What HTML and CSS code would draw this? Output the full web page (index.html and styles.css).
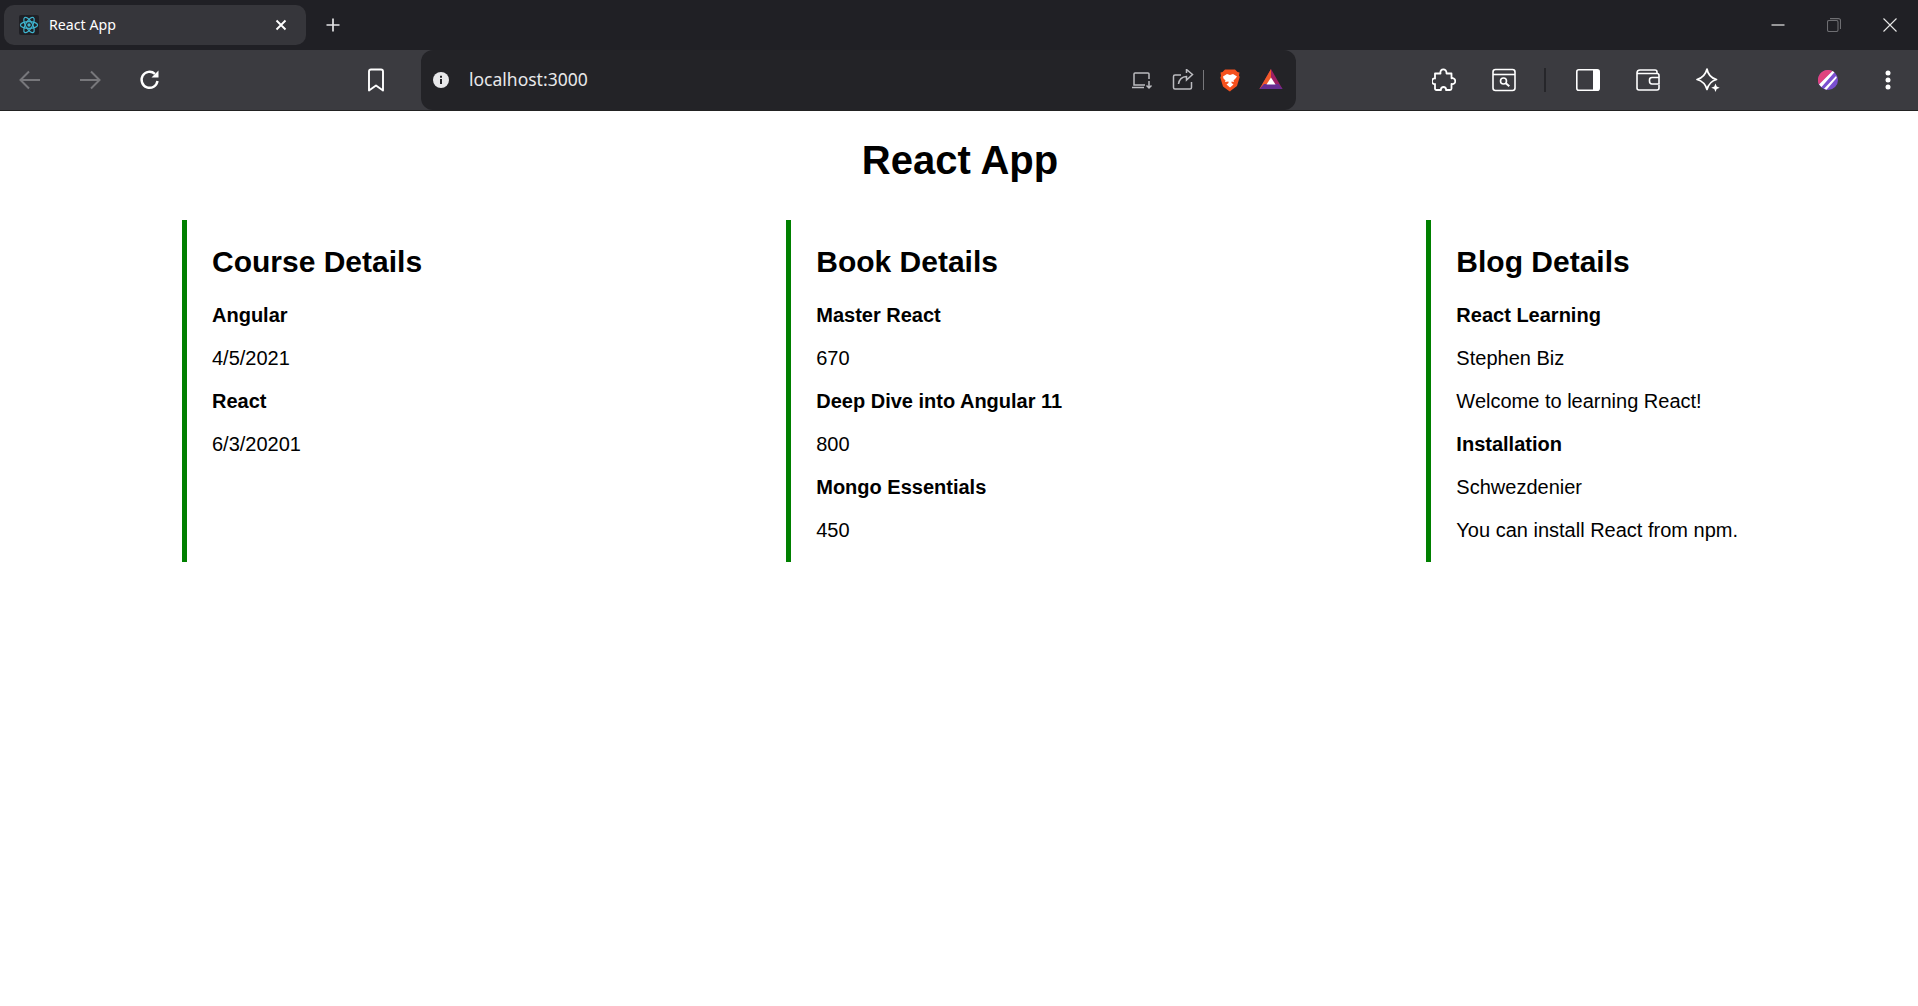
FILE: index.html
```html
<!DOCTYPE html>
<html>
<head>
  <meta charset="UTF-8">
  <title>React App</title>
  <link rel="stylesheet" href="styles.css">
</head>
<body>
  <div class="tab-strip">
    <div class="tab">
      <span class="favicon">
        <svg width="20" height="20" viewBox="0 0 20 20" fill="none" stroke="#3fb4cf" stroke-width="1.2">
          <ellipse cx="10" cy="10" rx="8.6" ry="3.4"/>
          <ellipse cx="10" cy="10" rx="8.6" ry="3.4" transform="rotate(60 10 10)"/>
          <ellipse cx="10" cy="10" rx="8.6" ry="3.4" transform="rotate(120 10 10)"/>
          <circle cx="10" cy="10" r="1.7" fill="#3fb4cf" stroke="none"/>
        </svg>
      </span>
      <span class="tab-title">React App</span>
      <svg class="tab-close" width="12" height="12" viewBox="0 0 12 12" stroke="#fff" stroke-width="1.9"><path d="M1.5 1.5l9 9M10.5 1.5l-9 9"/></svg>
    </div>
    <svg class="new-tab" width="16" height="16" viewBox="0 0 16 16" stroke="#e4e4e6" stroke-width="1.7"><path d="M8 1.5v13M1.5 8h13"/></svg>
    <div class="window-controls">
      <svg width="14" height="14" viewBox="0 0 14 14" stroke="#e8e8e8" stroke-width="1.2"><path d="M0.5 7h13"/></svg>
      <svg width="14" height="14" viewBox="0 0 14 14" fill="none" stroke="#6e6e72" stroke-width="1.1"><rect x="0.5" y="2.5" width="10.5" height="11" rx="1.5"/><path d="M3 0.6h8.5a2 2 0 0 1 2 2v8.5"/></svg>
      <svg width="14" height="14" viewBox="0 0 14 14" stroke="#e8e8e8" stroke-width="1.1"><path d="M0.5 0.5l13 13M13.5 0.5l-13 13"/></svg>
    </div>
  </div>

  <div class="toolbar">
    <div class="nav-buttons">
      <svg class="icon" viewBox="0 0 24 24" fill="none" stroke="#77777b" stroke-width="2"><path d="M22 12H3M11 3.500L2.500 12l8.500 8.500"/></svg>
      <svg class="icon" viewBox="0 0 24 24" fill="none" stroke="#77777b" stroke-width="2"><path d="M2 12h19M13 3.500l8.500 8.500L13 20.500"/></svg>
      <svg class="icon" viewBox="0 0 24 24" fill="none" stroke="#fff" stroke-width="2.400"><path d="M19.500 13a8 8 0 1 1-2.600-7.200"/><path d="M20.500 2.500v7h-7z" fill="#fff" stroke="none"/></svg>
    </div>
    <svg class="icon bookmark" viewBox="0 0 24 24" fill="none" stroke="#fff" stroke-width="1.900" stroke-linejoin="round"><path d="M5 3.500q0-2 2-2h10q2 0 2 2v19l-7-5-7 5z"/></svg>
    <div class="omnibox">
      <svg class="info-icon" width="16" height="16" viewBox="0 0 16 16"><circle cx="8" cy="8" r="8" fill="#e8e8ea"/><path d="M7 7h2v5H7zM7 3.800h2v2H7z" fill="#232327"/></svg>
      <span class="url">localhost:3000</span>
      <div class="omnibox-actions">
        <svg class="small-icon" viewBox="0 0 22 22" fill="none" stroke="#bcbcc0" stroke-width="1.500"><path d="M14 16H3V5q0-1 1-1h13q1 0 1 1v5"/><path d="M1 18.500h12"/><path d="M18 12v6.500M15.500 16.500l2.500 2.500 2.500-2.500"/></svg>
        <svg class="small-icon" viewBox="0 0 22 22" fill="none" stroke="#bcbcc0" stroke-width="1.500"><path d="M9 6H3q-1.500 0-1.500 1.500v11Q1.500 20 3 20h15q1.500 0 1.500-1.500V13"/><path d="M6.500 15q1-7 8-7.500V11l6-5.500-6-5V4"/></svg>
        <span class="omnibox-sep"></span>
        <svg class="brave-icon" width="20" height="23" viewBox="0 0 20 23">
          <path d="M5 .5h10l2.500 2.500 2 .5-.5 3 .7 1.500-2.700 9-6 4.500-.999 1L9 22l-6-4.500-2.700-9L1 7 .5 3.500l2-.5z" fill="#f4511e"/>
          <path d="M3 7.500L7 5l3 1 3-1 4 2.500-1.500 2-2 2 .5 1.500-2.500-.5V14l2 1.500-3.500 3-3.500-3 2-1.500v-1.500L5 13l.5-1.500-2-2z" fill="#fff"/>
        </svg>
        <svg class="bat-icon" width="24" height="22" viewBox="0 0 24 22"><path d="M12 0l11.500 20H.500z" fill="#9e1f63"/><path d="M12 0L.500 20h6L12 11z" fill="#f15a29"/><path d="M.500 20h23l-4-5H5z" fill="#662d91"/><path d="M12 8.500l4.500 7h-9z" fill="#fff"/></svg>
      </div>
    </div>
    <div class="tool-icons">
      <svg class="icon" viewBox="0 0 24 24" fill="none" stroke="#fff" stroke-width="1.800" stroke-linejoin="round"><path d="M3 5.500h5.500C7.500 0 15 0 14.500 5.500H19.500v4.800c5-1 5 6.700 0 5.700V20.500q0 1.500-1.500 1.500H14c.7-4-5.700-4-5 0H4.500Q3 22 3 20.500V16C-1 17-1 9.500 3 10.500z"/></svg>
      <svg class="icon" viewBox="0 0 24 24" fill="none" stroke="#fff" stroke-width="1.600"><rect x="1" y="1.500" width="22" height="21" rx="2.500"/><path d="M1 6.500h22"/><circle cx="11.500" cy="13" r="3"/><path d="M13.800 15.300l3.500 3" stroke-width="2"/></svg>
      <span class="tool-sep"></span>
      <svg class="icon" viewBox="0 0 24 24" fill="none" stroke="#fff" stroke-width="1.600"><rect x="0.800" y="1.800" width="22.400" height="20.400" rx="2"/><rect x="17" y="2" width="6" height="20" fill="#fff" stroke="none"/></svg>
      <svg class="icon" viewBox="0 0 24 24" fill="none" stroke="#fff" stroke-width="1.600"><path d="M21 5.500V4q0-2-2-2H4q-3 0-3 3v15q0 2 2 2h18q2 0 2-2v-3"/><path d="M1 5.500h20q2 0 2 2V9"/><path d="M23 9.500h-7q-2.500 0-2.500 2.500v1q0 3 2.500 3h7z"/></svg>
      <svg class="icon" viewBox="0 0 24 24" fill="none" stroke="#fff" stroke-width="1.700" stroke-linejoin="round"><path d="M11 1c1 6 4 9 9.500 10.500C15 13 12.500 16 11 21.500 9.500 16 6.500 13 1 11.500 6.500 10 9.500 7 11 1z"/><path d="M19.500 15.500l1.200 3 3 1.200-3 1.200-1.200 3-1.200-3-3-1.200 3-1.200z" fill="#fff" stroke="none"/></svg>
      <svg class="avatar" width="20" height="20" viewBox="0 0 20 20">
        <circle cx="10" cy="10" r="10" fill="#7a4fd0"/>
        <path d="M10 0A10 10 0 0 0 1 14.500L14.500 1A10 10 0 0 0 10 0z" fill="#e0427f"/>
        <path d="M1 14.500L14.500 1l2 1.300L3.500 17zM6 18.700L18 6l.8 1.800L8.500 19.800z" fill="#fff"/>
      </svg>
      <svg class="menu-dots" width="6" height="20" viewBox="0 0 6 20" fill="#fff"><circle cx="3" cy="3" r="2.500"/><circle cx="3" cy="10" r="2.500"/><circle cx="3" cy="17" r="2.500"/></svg>
    </div>
  </div>

  <div class="app">
    <h1>React App</h1>
    <div class="details-row">
      <div class="details">
        <h2>Course Details</h2>
        <p class="name">Angular</p>
        <p>4/5/2021</p>
        <p class="name">React</p>
        <p>6/3/20201</p>
      </div>
      <div class="details">
        <h2>Book Details</h2>
        <p class="name">Master React</p>
        <p>670</p>
        <p class="name">Deep Dive into Angular 11</p>
        <p>800</p>
        <p class="name">Mongo Essentials</p>
        <p>450</p>
      </div>
      <div class="details">
        <h2>Blog Details</h2>
        <p class="name">React Learning</p>
        <p>Stephen Biz</p>
        <p>Welcome to learning React!</p>
        <p class="name">Installation</p>
        <p>Schwezdenier</p>
        <p>You can install React from npm.</p>
      </div>
    </div>
  </div>
</body>
</html>
```

FILE: styles.css
```css
html, body {
  height: 100%;
}
body {
  margin: 0;
  background: #fff;
  color: #000;
  font-family: "Liberation Sans", Arial, sans-serif;
  display: flex;
  flex-direction: column;
  overflow: hidden;
}

/* browser chrome */
.tab-strip {
  height: 50px;
  flex-shrink: 0;
  background: #202025;
  display: flex;
  align-items: center;
  padding-left: 4px;
  font-family: "Noto Sans", sans-serif;
}
.tab {
  width: 302px;
  height: 40px;
  background: #36363b;
  border-radius: 10px;
  display: flex;
  align-items: center;
  padding: 0 19px 0 15px;
  box-sizing: border-box;
}
.favicon {
  width: 20px;
  height: 20px;
  background: #202025;
  border-radius: 2px;
  margin-right: 10px;
  flex-shrink: 0;
}
.favicon svg {
  display: block;
}
.tab-title {
  color: #fff;
  font-size: 14.2px;
  flex: 1;
  margin-bottom: 2px;
}
.new-tab {
  margin-left: 19px;
}
.window-controls {
  margin-left: auto;
  display: flex;
  gap: 42px;
  padding-right: 21px;
}
.toolbar {
  height: 61px;
  flex-shrink: 0;
  background: #3b3b40;
  border-bottom: 1px solid #222;
  display: flex;
  align-items: center;
  padding-left: 18px;
  box-sizing: border-box;
}
.icon {
  width: 24px;
  height: 24px;
  flex-shrink: 0;
}
.nav-buttons {
  display: flex;
  gap: 36px;
}
.bookmark {
  margin-left: 202px;
}
.omnibox {
  width: 875px;
  height: 60px;
  margin-left: 33px;
  background: #232327;
  border-radius: 12px;
  display: flex;
  align-items: center;
  padding-left: 12px;
  box-sizing: border-box;
  flex-shrink: 0;
}
.info-icon {
  flex-shrink: 0;
}
.url {
  color: #e8e8ea;
  font-family: "Noto Sans", sans-serif;
  font-size: 17.5px;
  margin-left: 20px;
  margin-bottom: 2px;
}
.omnibox-actions {
  margin-left: auto;
  display: flex;
  align-items: center;
  padding-right: 13px;
}
.small-icon {
  width: 22px;
  height: 22px;
  margin-right: 19px;
}
.omnibox-sep {
  width: 1px;
  height: 20px;
  background: #77777b;
  margin-left: -10px;
  margin-right: 16px;
}
.bat-icon {
  margin-left: 19px;
}
.tool-icons {
  display: flex;
  align-items: center;
  gap: 36px;
  margin-left: 136px;
}
.tool-sep {
  width: 2px;
  height: 24px;
  background: #26262a;
  margin: 0 -6px 0 -8px;
}
.avatar {
  margin-left: 62px;
}
.menu-dots {
  margin-left: 11px;
}

/* page */
.app {
  flex: 1;
}
h1 {
  font-size: 40px;
  text-align: center;
  margin: 27px 0 37px;
  padding-left: 2px;
}
.details-row {
  display: flex;
  justify-content: space-between;
  padding: 0 180px 0 182px;
}
.details {
  border-left: 5px solid green;
  padding-left: 25px;
}
h2 {
  font-size: 30px;
  margin: 25px 0 24.5px;
}
p {
  font-size: 20px;
  margin: 0 0 20px;
}
.name {
  font-weight: bold;
}
```
